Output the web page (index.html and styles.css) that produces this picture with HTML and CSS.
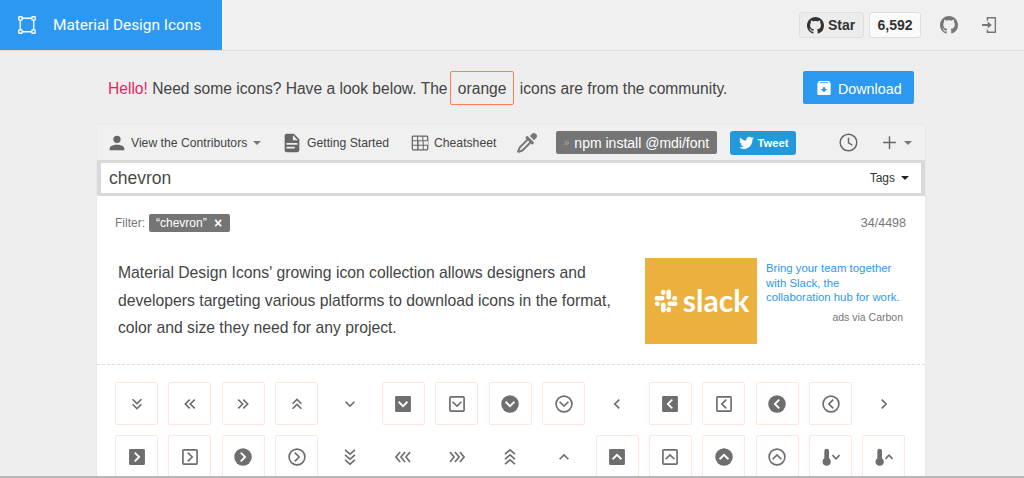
FILE: index.html
```html
<!DOCTYPE html>
<html lang="en">
<head>
  <meta charset="UTF-8" />
  <title>Material Design Icons</title>
  <link rel="stylesheet" href="styles.css">
</head>
<body>
  <svg class="defs" width="0" height="0">
    <symbol id="dbl-down" viewBox="0 0 24 24"><path d="M6.700 6.300 12 11.600l5.300-5.300M6.700 12.300l5.300 5.300 5.300-5.300"/></symbol>
    <symbol id="dbl-left" viewBox="0 0 24 24"><path d="M11.700 6.700 6.400 12l5.300 5.300M17.700 6.700 12.400 12l5.300 5.300"/></symbol>
    <symbol id="dbl-right" viewBox="0 0 24 24"><path d="M6.300 6.700 11.600 12l-5.300 5.300M12.300 6.700 17.600 12l-5.300 5.300"/></symbol>
    <symbol id="dbl-up" viewBox="0 0 24 24"><path d="M6.700 11.700 12 6.400l5.300 5.300M6.700 17.700l5.300-5.300 5.300 5.300"/></symbol>
    <symbol id="down" viewBox="0 0 24 24"><path d="M6.700 9.300 12 14.600l5.300-5.300"/></symbol>
    <symbol id="up" viewBox="0 0 24 24"><path d="M6.700 14.700 12 9.400l5.300 5.300"/></symbol>
    <symbol id="left" viewBox="0 0 24 24"><path d="M14.700 6.700 9.400 12l5.300 5.300"/></symbol>
    <symbol id="right" viewBox="0 0 24 24"><path d="M9.300 6.700 14.600 12l-5.300 5.300"/></symbol>
    <symbol id="tri-down" viewBox="0 0 24 24"><path d="M6 3.500l6 5 6-5M6 9.500l6 5 6-5M6 15.500l6 5 6-5"/></symbol>
    <symbol id="tri-up" viewBox="0 0 24 24"><path d="M6 8.500l6-5 6 5M6 14.500l6-5 6 5M6 20.500l6-5 6 5"/></symbol>
    <symbol id="tri-left" viewBox="0 0 24 24"><path d="M8.500 6l-5 6 5 6M14.500 6l-5 6 5 6M20.500 6l-5 6 5 6"/></symbol>
    <symbol id="tri-right" viewBox="0 0 24 24"><path d="M3.500 6l5 6-5 6M9.500 6l5 6-5 6M15.500 6l5 6-5 6"/></symbol>
    <symbol id="box-solid" viewBox="0 0 24 24"><rect class="fill" x="2.500" y="2.500" width="19" height="19" rx="1.500"/></symbol>
    <symbol id="box-line" viewBox="0 0 24 24"><rect x="3.500" y="3.500" width="17" height="17" rx="1"/></symbol>
    <symbol id="disc-solid" viewBox="0 0 24 24"><circle class="fill" cx="12" cy="12" r="10.500"/></symbol>
    <symbol id="disc-line" viewBox="0 0 24 24"><circle cx="12" cy="12" r="9.500"/></symbol>
    <symbol id="thermo" viewBox="0 0 24 24"><path class="fill" d="M8 2a2.800 2.800 0 0 1 2.800 2.800v8.700a5 5 0 1 1-5.600 0V4.800A2.800 2.800 0 0 1 8 2Z"/></symbol>
  </svg>

  <header class="topbar">
    <a class="brand">
      <svg class="brand-icon" viewBox="0 0 24 24"><path d="M5.500 3h13M5.500 21h13M3 5.500v13M21 5.500v13" /><rect x="1" y="1" width="4.500" height="4.500" rx=".8"/><rect x="18.500" y="1" width="4.500" height="4.500" rx=".8"/><rect x="1" y="18.500" width="4.500" height="4.500" rx=".8"/><rect x="18.500" y="18.500" width="4.500" height="4.500" rx=".8"/></svg>
      <span>Material Design Icons</span>
    </a>
    <div class="top-actions">
      <a class="gh-btn">
        <svg class="gh-mark" viewBox="0 0 16 16"><path d="M8 0C3.580 0 0 3.580 0 8c0 3.540 2.290 6.530 5.470 7.590.4.070.55-.17.55-.38 0-.19-.01-.82-.01-1.490-2.010.37-2.530-.49-2.690-.94-.09-.23-.48-.94-.82-1.130-.28-.15-.68-.52-.01-.53.630-.01 1.080.58 1.230.82.720 1.210 1.870.87 2.330.66.070-.52.280-.87.510-1.070-1.780-.2-3.640-.89-3.640-3.950 0-.87.310-1.590.820-2.150-.08-.2-.36-1.020.08-2.120 0 0 .67-.21 2.200.82.640-.18 1.320-.27 2-.27s1.360.09 2 .27c1.530-1.040 2.200-.82 2.200-.82.440 1.100.16 1.920.08 2.120.51.56.82 1.270.82 2.150 0 3.070-1.870 3.750-3.650 3.950.29.25.54.73.54 1.480 0 1.070-.01 1.930-.01 2.200 0 .21.150.46.550.38A8.010 8.010 0 0 0 16 8c0-4.420-3.580-8-8-8Z"/></svg>
        Star
      </a>
      <a class="gh-count">6,592</a>
      <svg class="top-icon gh-plain" viewBox="0 0 16 16"><path d="M8 0C3.580 0 0 3.580 0 8c0 3.540 2.290 6.530 5.470 7.590.4.070.55-.17.55-.38 0-.19-.01-.82-.01-1.490-2.010.37-2.530-.49-2.690-.94-.09-.23-.48-.94-.82-1.130-.28-.15-.68-.52-.01-.53.630-.01 1.080.58 1.230.82.720 1.210 1.870.87 2.330.66.070-.52.280-.87.510-1.070-1.780-.2-3.640-.89-3.640-3.950 0-.87.310-1.590.820-2.150-.08-.2-.36-1.020.08-2.120 0 0 .67-.21 2.200.82.640-.18 1.320-.27 2-.27s1.360.09 2 .27c1.530-1.040 2.200-.82 2.200-.82.440 1.100.16 1.920.08 2.120.51.56.82 1.270.82 2.150 0 3.070-1.870 3.750-3.650 3.950.29.25.54.73.54 1.480 0 1.070-.01 1.930-.01 2.200 0 .21.150.46.550.38A8.010 8.010 0 0 0 16 8c0-4.420-3.580-8-8-8Z"/></svg>
      <svg class="top-icon login" viewBox="0 0 16 19"><path d="M5 1h9.500a.500.500 0 0 1 .500.500v16a.500.500 0 0 1-.500.500H5v-3.500h1.500V16.500h7v-14h-7v2.500H5V1ZM0 8.500h6V5.800l4.500 3.700-4.500 3.700v-2.700H0v-2Z"/></svg>
    </div>
  </header>

  <section class="intro">
    <p class="intro-text"><span class="hello">Hello!</span> Need some icons? Have a look below. The <span class="orange">orange</span> icons are from the community.</p>
    <a class="download">
      <svg viewBox="0 0 24 24"><path d="M4.500 1.500h15L22 5v15.500a2 2 0 0 1-2 2H4a2 2 0 0 1-2-2V5l2.500-3.500ZM5 4.500h14l-.8-1H5.800L5 4.500ZM12 18.500l5-5h-3.200v-2.500h-3.600v2.500H7l5 5Z" fill-rule="evenodd"/></svg>
      Download
    </a>
  </section>

  <main class="panel">
    <nav class="toolbar">
      <a class="tool tool-contrib">
        <svg viewBox="0 0 24 24"><path d="M12 4a4 4 0 1 1 0 8 4 4 0 0 1 0-8Zm0 10c4.420 0 8 1.790 8 4v2H4v-2c0-2.210 3.580-4 8-4Z"/></svg>
        View the Contributors <i class="caret"></i>
      </a>
      <a class="tool tool-start">
        <svg viewBox="0 0 24 24"><path d="M13 9h5.500L13 3.500V9ZM6 2h8l6 6v12a2 2 0 0 1-2 2H6c-1.110 0-2-.9-2-2V4c0-1.110.89-2 2-2Zm9 16v-2H6v2h9Zm3-4v-2H6v2h12Z"/></svg>
        Getting Started
      </a>
      <a class="tool tool-sheet">
        <svg viewBox="0 0 24 24"><path d="M4 3h16a2 2 0 0 1 2 2v14a2 2 0 0 1-2 2H4a2 2 0 0 1-2-2V5a2 2 0 0 1 2-2Zm0 1.500a.500.500 0 0 0-.500.500v3.800h5V4.500H4.500Zm5.800 0v4.300h5V4.500h-5Zm6.200 0v4.300h4.500V5a.500.500 0 0 0-.500-.500h-4ZM3.500 10v4h5v-4h-5Zm6.800 0v4h5v-4h-5Zm6.200 0v4h5v-4h-5ZM3.500 15.200V19c0 .3.200.500.500.500h4.500v-4.300h-5Zm6.800 0v4.300h5v-4.300h-5Zm6.200 0v4.300H20c.3 0 .500-.2.500-.500v-3.800h-4Z" fill-rule="evenodd"/></svg>
        Cheatsheet
      </a>
      <svg class="picker" viewBox="0 0 24 24"><path d="M19.350 11.720l-2.130 2.130-1.410-1.420-7.710 7.710L3.500 22 2 20.500l1.860-4.600 7.710-7.710-1.420-1.410 2.130-2.130 7.070 7.070ZM16.760 3a2.990 2.990 0 0 1 4.240 0 2.990 2.990 0 0 1 0 4.240l-1.920 1.920-4.240-4.240L16.760 3ZM5.560 17.030 4.500 19.500l2.470-1.060L14.400 11 13 9.600l-7.440 7.430Z"/></svg>
      <span class="npm"><em>»</em> npm install @mdi/font</span>
      <a class="tweet">
        <svg viewBox="0 0 24 24"><path d="M22.460 6c-.77.350-1.600.580-2.460.690.880-.53 1.560-1.370 1.880-2.380-.83.500-1.750.850-2.720 1.050C18.370 4.500 17.260 4 16 4c-2.350 0-4.270 1.920-4.270 4.290 0 .34.040.67.110.98C8.280 9.090 5.110 7.380 3 4.790c-.37.630-.58 1.370-.58 2.150 0 1.490.750 2.810 1.910 3.560-.71 0-1.370-.2-1.950-.5v.030c0 2.080 1.480 3.820 3.440 4.210a4.220 4.220 0 0 1-1.930.070 4.280 4.280 0 0 0 4 2.980 8.520 8.520 0 0 1-5.330 1.840c-.34 0-.68-.02-1.020-.06C3.440 20.290 5.700 21 8.120 21 16 21 20.330 14.460 20.330 8.790c0-.19 0-.37-.01-.56.840-.6 1.560-1.360 2.140-2.230Z"/></svg>
        Tweet
      </a>
      <svg class="clock" viewBox="0 0 24 24"><circle cx="12" cy="12" r="10.500"/><path d="M12 6V12.500l4.800 2.900"/></svg>
      <span class="plus"><svg viewBox="0 0 24 24"><path d="M12 3v18M3 12h18"/></svg><i class="caret"></i></span>
    </nav>

    <div class="search">
      <span class="search-value">chevron</span>
      <span class="tags">Tags <i class="caret dark"></i></span>
    </div>

    <div class="content">
      <div class="filter-row">
        <span class="filter">Filter: <span class="chip">“chevron” <b>×</b></span></span>
        <span class="count">34/4498</span>
      </div>

      <div class="about">
        <p>Material Design Icons' growing icon collection allows designers and developers targeting various platforms to download icons in the format, color and size they need for any project.</p>
        <div class="ad">
          <div class="ad-image">
            <svg viewBox="0 0 24 24"><path class="slack-mark" d="M3.500 9.500H8.500M9.500 3.800v.4M14.500 3.500V8.500M20.200 9.500h-.4M20.500 14.500H15.500M14.500 20.200v-.4M9.500 20.500V15.500M3.800 14.500h.4"/></svg>
            <span>slack</span>
          </div>
          <div class="ad-copy">
            <a>Bring your team together<br>with Slack, the<br>collaboration hub for work.</a>
            <small>ads via Carbon</small>
          </div>
        </div>
      </div>

      <div class="icons">
        <a class="ico comm"><svg><use href="#dbl-down"/></svg></a>
        <a class="ico comm"><svg><use href="#dbl-left"/></svg></a>
        <a class="ico comm"><svg><use href="#dbl-right"/></svg></a>
        <a class="ico comm"><svg><use href="#dbl-up"/></svg></a>
        <a class="ico"><svg><use href="#down"/></svg></a>
        <a class="ico comm"><svg><use href="#box-solid"/><use class="knock" href="#down"/></svg></a>
        <a class="ico comm"><svg><use href="#box-line"/><use href="#down"/></svg></a>
        <a class="ico comm"><svg><use href="#disc-solid"/><use class="knock" href="#down"/></svg></a>
        <a class="ico comm"><svg><use href="#disc-line"/><use href="#down"/></svg></a>
        <a class="ico"><svg><use href="#left"/></svg></a>
        <a class="ico comm"><svg><use href="#box-solid"/><use class="knock" href="#left"/></svg></a>
        <a class="ico comm"><svg><use href="#box-line"/><use href="#left"/></svg></a>
        <a class="ico comm"><svg><use href="#disc-solid"/><use class="knock" href="#left"/></svg></a>
        <a class="ico comm"><svg><use href="#disc-line"/><use href="#left"/></svg></a>
        <a class="ico"><svg><use href="#right"/></svg></a>

        <a class="ico comm"><svg><use href="#box-solid"/><use class="knock" href="#right"/></svg></a>
        <a class="ico comm"><svg><use href="#box-line"/><use href="#right"/></svg></a>
        <a class="ico comm"><svg><use href="#disc-solid"/><use class="knock" href="#right"/></svg></a>
        <a class="ico comm"><svg><use href="#disc-line"/><use href="#right"/></svg></a>
        <a class="ico"><svg><use href="#tri-down"/></svg></a>
        <a class="ico"><svg><use href="#tri-left"/></svg></a>
        <a class="ico"><svg><use href="#tri-right"/></svg></a>
        <a class="ico"><svg><use href="#tri-up"/></svg></a>
        <a class="ico"><svg><use href="#up"/></svg></a>
        <a class="ico comm"><svg><use href="#box-solid"/><use class="knock" href="#up"/></svg></a>
        <a class="ico comm"><svg><use href="#box-line"/><use href="#up"/></svg></a>
        <a class="ico comm"><svg><use href="#disc-solid"/><use class="knock" href="#up"/></svg></a>
        <a class="ico comm"><svg><use href="#disc-line"/><use href="#up"/></svg></a>
        <a class="ico comm"><svg><use href="#thermo" x="-1"/><use class="thin" href="#down" x="7" y="2" width="16" height="16"/></svg></a>
        <a class="ico comm"><svg><use href="#thermo" x="-1"/><use class="thin" href="#up" x="7" y="2" width="16" height="16"/></svg></a>
      </div>
    </div>
  </main>
  <div class="window-edge"></div>
</body>
</html>
```

FILE: styles.css
```css
* {
  box-sizing: border-box;
}
html, body {
  height: 478px;
  overflow: hidden;
}
body {
  margin: 0;
  background: #eeeeee;
  color: #444;
  font-family: "Liberation Sans", Arial, sans-serif;
  position: relative;
}
.defs {
  position: absolute;
}
.fill {
  fill: #6e6e6e;
  stroke: none;
}

/* top bar */
.topbar {
  height: 51px;
  display: flex;
  justify-content: space-between;
  background: #f0f0f0;
  border-bottom: 1px solid #dddddd;
}
.brand {
  width: 222px;
  height: 50px;
  padding-left: 18px;
  display: flex;
  align-items: center;
  gap: 17px;
  background: #2c98f0;
  color: #fff;
  font-family: Roboto, sans-serif;
  font-size: 15.400px;
  font-weight: 400;
}
.brand-icon {
  width: 18px;
  height: 18px;
  fill: none;
  stroke: #fff;
  stroke-width: 1.700;
}
.top-actions {
  display: flex;
  align-items: center;
  padding-right: 27px;
}
.gh-btn, .gh-count {
  height: 26px;
  display: flex;
  align-items: center;
  border: 1px solid #dedede;
  border-radius: 3px;
  font-size: 14px;
  font-weight: 700;
  color: #333;
}
.gh-btn {
  width: 65px;
  padding-left: 7px;
  gap: 4px;
  background: #ececec;
}
.gh-mark {
  width: 17px;
  height: 17px;
  fill: #333;
}
.gh-count {
  width: 52px;
  margin-left: 5px;
  justify-content: center;
  background: #fafafa;
}
.top-icon {
  fill: #777;
}
.gh-plain {
  width: 18px;
  height: 18px;
  margin-left: 19px;
}
.login {
  width: 15px;
  height: 18px;
  margin-left: 24px;
}

/* intro line */
.intro {
  width: 828px;
  height: 34px;
  margin: 20px 0 20px 97px;
  padding: 0 11px;
  display: flex;
  justify-content: space-between;
  align-items: flex-start;
}
.intro-text {
  height: 34px;
  margin: 0;
  padding-top: 2px;
  font-size: 15.600px;
  display: flex;
  align-items: center;
  white-space: pre;
}
.hello {
  color: #e91e63;
}
.orange {
  height: 34px;
  margin: -2px 1px 0 -2px;
  padding: 2px 7px 0;
  display: flex;
  align-items: center;
  border: 1px solid #ff7f50;
  border-radius: 2px;
}
.download {
  width: 111px;
  height: 33px;
  padding: 2px 0 0 13px;
  display: flex;
  align-items: center;
  gap: 6px;
  background: #2c98f0;
  border-radius: 2px;
  color: #fff;
  font-size: 14.300px;
}
.download svg {
  width: 16px;
  height: 16px;
  fill: #fff;
  margin-top: -2px;
}

/* panel */
.panel {
  width: 828px;
  height: 360px;
  margin-left: 97px;
  background: #fff;
  box-shadow: 0 0 2px #e2e2e2;
}
.toolbar {
  height: 35px;
  padding-left: 9px;
  display: flex;
  align-items: center;
  background: #f0f0f0;
  font-size: 12.200px;
}
.tool {
  display: flex;
  align-items: center;
  color: #444;
}
.tool svg {
  fill: #666;
  width: 22px;
  height: 22px;
}
.tool-contrib {
  gap: 3px;
  width: 175px;
}
.tool-start {
  gap: 4px;
  width: 129px;
}
.tool-sheet {
  gap: 4px;
  width: 105px;
}
.tool-sheet svg {
  width: 20px;
  height: 20px;
}
.caret {
  display: inline-block;
  width: 0;
  height: 0;
  margin-left: 3px;
  border: 4px solid transparent;
  border-top-color: #777;
  border-bottom: 0;
}
.caret.dark {
  border-top-color: #222;
}
.picker {
  width: 24px;
  height: 24px;
  fill: #777;
  margin-right: 17px;
}
.npm {
  width: 161px;
  height: 23px;
  display: flex;
  align-items: center;
  justify-content: center;
  gap: 5px;
  background: #757575;
  border-radius: 2px;
  color: #fff;
  font-size: 14px;
}
.npm em {
  font-style: normal;
  color: #aaa;
  font-size: 10px;
}
.tweet {
  width: 66px;
  height: 24px;
  margin-left: 13px;
  display: flex;
  align-items: center;
  justify-content: center;
  gap: 3px;
  background: #2398dd;
  border-radius: 3px;
  color: #fff;
  font-size: 11.200px;
  font-weight: 700;
}
.tweet svg {
  width: 17px;
  height: 17px;
  fill: #fff;
}
.clock {
  width: 19px;
  height: 19px;
  margin-left: 43px;
  fill: none;
  stroke: #666;
  stroke-width: 1.800;
}
.plus {
  margin-left: 23px;
  display: flex;
  align-items: center;
}
.plus svg {
  width: 17px;
  height: 17px;
  fill: none;
  stroke: #666;
  stroke-width: 2;
}
.plus .caret {
  margin-left: 6px;
}
.search {
  height: 36px;
  padding: 0 12px 0 8px;
  display: flex;
  align-items: center;
  justify-content: space-between;
  background: #fff;
  border: solid #d9d9d9;
  border-width: 3px 4px;
}
.search-value {
  font-size: 17.500px;
  color: #4a4a4a;
}
.tags {
  font-size: 12px;
  color: #333;
  display: flex;
  align-items: center;
  gap: 3px;
}

/* content */
.filter-row {
  height: 54px;
  padding: 0 19px 0 18px;
  display: flex;
  justify-content: space-between;
  align-items: center;
  font-size: 12px;
  color: #777;
}
.count {
  font-size: 12.500px;
}
.filter {
  display: flex;
  align-items: center;
  gap: 4px;
}
.chip {
  height: 18px;
  padding: 0 8px 0 7px;
  display: flex;
  align-items: center;
  white-space: pre;
  background: #757575;
  border-radius: 2px;
  color: #fff;
}
.chip b {
  font-size: 14px;
  margin-left: 4px;
}
.about {
  height: 115px;
  padding: 8px 21px 0;
  display: flex;
  justify-content: space-between;
  border-bottom: 1px dashed #dddddd;
}
.about p {
  width: 510px;
  margin: 0;
  font-size: 15.730px;
  line-height: 27.500px;
  color: #444;
  padding-top: 1px;
}
.ad {
  width: 260px;
  margin-right: -1px;
  display: flex;
  gap: 9px;
}
.ad-image {
  width: 112px;
  height: 86px;
  flex: none;
  display: flex;
  align-items: center;
  justify-content: center;
  gap: 4px;
  background: #ebb13c;
  color: #fff;
  font-family: Lato, sans-serif;
  font-size: 30px;
  font-weight: 700;
}
.ad-image span {
  margin-top: -3px;
}
.ad-image svg {
  width: 26px;
  height: 26px;
}
.slack-mark {
  fill: none;
  stroke: #fff;
  stroke-width: 4.300;
  stroke-linecap: round;
}
.ad-copy {
  flex: 1;
  font-size: 11.400px;
  line-height: 14.500px;
  padding-top: 3px;
}
.ad-copy a {
  display: block;
  color: #2c98f0;
}
.ad-copy small {
  display: block;
  margin-top: 5px;
  padding-right: 2px;
  text-align: right;
  font-size: 10.500px;
  color: #777;
}
.icons {
  padding: 17px 18px 0;
  display: grid;
  grid-template-columns: repeat(15, 43px);
  column-gap: 10.400px;
  row-gap: 10px;
}
.ico {
  width: 43px;
  height: 43px;
  display: flex;
  align-items: center;
  justify-content: center;
  border: 1px solid transparent;
  border-radius: 2px;
}
.ico.comm {
  border-color: #ffe7e0;
}
.ico svg {
  width: 20px;
  height: 20px;
  fill: none;
  stroke: #6e6e6e;
  stroke-width: 2;
  overflow: visible;
}
.ico svg .knock {
  stroke: #fff;
  stroke-width: 2.200;
}
.ico svg .thin {
  stroke-width: 2.500;
}
.window-edge {
  position: absolute;
  left: 0;
  right: 0;
  bottom: 0;
  height: 2px;
  background: #b8b8b8;
}
```
